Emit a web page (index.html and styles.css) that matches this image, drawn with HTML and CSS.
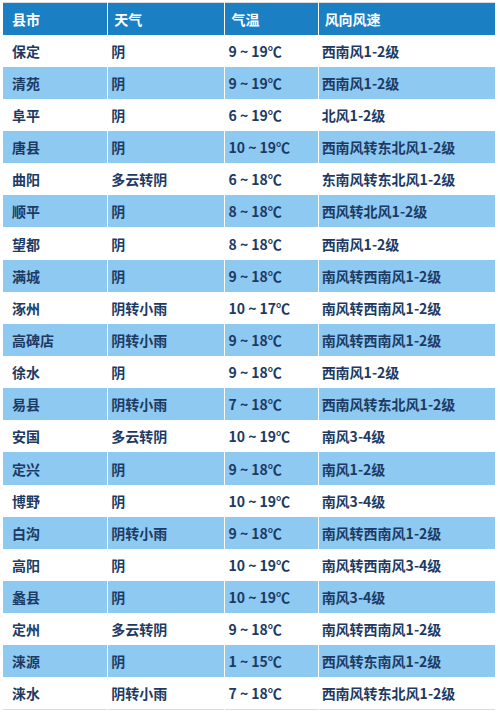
FILE: index.html
```html
<!DOCTYPE html>
<html lang="zh-CN">
<head>
<meta charset="utf-8">
<title>保定天气</title>
<link rel="stylesheet" href="styles.css">
</head>
<body>
<div class="wrap">
<table class="weather">
  <colgroup>
    <col class="c1"><col class="c2"><col class="c3"><col class="c4">
  </colgroup>
  <thead>
    <tr><th class="city">县市</th><th>天气</th><th>气温</th><th>风向风速</th></tr>
  </thead>
  <tbody>
    <tr><td class="city">保定</td><td>阴</td><td>9 ~ 19℃</td><td>西南风1-2级</td></tr>
    <tr><td class="city">清苑</td><td>阴</td><td>9 ~ 19℃</td><td>西南风1-2级</td></tr>
    <tr><td class="city">阜平</td><td>阴</td><td>6 ~ 19℃</td><td>北风1-2级</td></tr>
    <tr><td class="city">唐县</td><td>阴</td><td>10 ~ 19℃</td><td>西南风转东北风1-2级</td></tr>
    <tr><td class="city">曲阳</td><td>多云转阴</td><td>6 ~ 18℃</td><td>东南风转东北风1-2级</td></tr>
    <tr><td class="city">顺平</td><td>阴</td><td>8 ~ 18℃</td><td>西风转北风1-2级</td></tr>
    <tr><td class="city">望都</td><td>阴</td><td>8 ~ 18℃</td><td>西南风1-2级</td></tr>
    <tr><td class="city">满城</td><td>阴</td><td>9 ~ 18℃</td><td>南风转西南风1-2级</td></tr>
    <tr><td class="city">涿州</td><td>阴转小雨</td><td>10 ~ 17℃</td><td>南风转西南风1-2级</td></tr>
    <tr><td class="city">高碑店</td><td>阴转小雨</td><td>9 ~ 18℃</td><td>南风转西南风1-2级</td></tr>
    <tr><td class="city">徐水</td><td>阴</td><td>9 ~ 18℃</td><td>西南风1-2级</td></tr>
    <tr><td class="city">易县</td><td>阴转小雨</td><td>7 ~ 18℃</td><td>西南风转东北风1-2级</td></tr>
    <tr><td class="city">安国</td><td>多云转阴</td><td>10 ~ 19℃</td><td>南风3-4级</td></tr>
    <tr><td class="city">定兴</td><td>阴</td><td>9 ~ 18℃</td><td>南风1-2级</td></tr>
    <tr><td class="city">博野</td><td>阴</td><td>10 ~ 19℃</td><td>南风3-4级</td></tr>
    <tr><td class="city">白沟</td><td>阴转小雨</td><td>9 ~ 18℃</td><td>南风转西南风1-2级</td></tr>
    <tr><td class="city">高阳</td><td>阴</td><td>10 ~ 19℃</td><td>南风转西南风3-4级</td></tr>
    <tr><td class="city">蠡县</td><td>阴</td><td>10 ~ 19℃</td><td>南风3-4级</td></tr>
    <tr><td class="city">定州</td><td>多云转阴</td><td>9 ~ 18℃</td><td>南风转西南风1-2级</td></tr>
    <tr><td class="city">涞源</td><td>阴</td><td>1 ~ 15℃</td><td>西风转东南风1-2级</td></tr>
    <tr><td class="city">涞水</td><td>阴转小雨</td><td>7 ~ 18℃</td><td>西南风转东北风1-2级</td></tr>
  </tbody>
</table>
</div>
</body>
</html>
```
FILE: styles.css
```css
html, body {
  margin: 0;
  padding: 0;
  background: #ffffff;
}
.wrap {
  padding: 2px 4px 4px 2px;
}
.weather {
  width: 494px;
  border-collapse: collapse;
  border: 1px solid #d9dde2;
  table-layout: fixed;
  font-family: "Noto Sans CJK SC", "Noto Sans", sans-serif;
  font-size: 14px;
  font-weight: bold;
  color: #1d3a63;
}
.weather tr {
  height: 32.15px;
}
.c1 { width: 105px; }
.c2 { width: 117px; }
.c3 { width: 93px; }
.c4 { width: 177px; }
.weather th,
.weather td {
  border-left: 1px solid #ffffff;
  border-right: 1px solid #ffffff;
  padding: 0 0 0 3px;
  text-align: left;
  vertical-align: middle;
  white-space: nowrap;
  line-height: 20px;
}
.weather th {
  background: #1a7fc3;
  color: #ffffff;
  padding-left: 6px;
}
.weather th.city,
.weather td.city {
  padding-left: 9px;
}
.weather tbody tr:nth-child(even) td {
  background: #8ec9f2;
}
.weather tbody tr:nth-child(odd) td {
  background: #ffffff;
}
```
